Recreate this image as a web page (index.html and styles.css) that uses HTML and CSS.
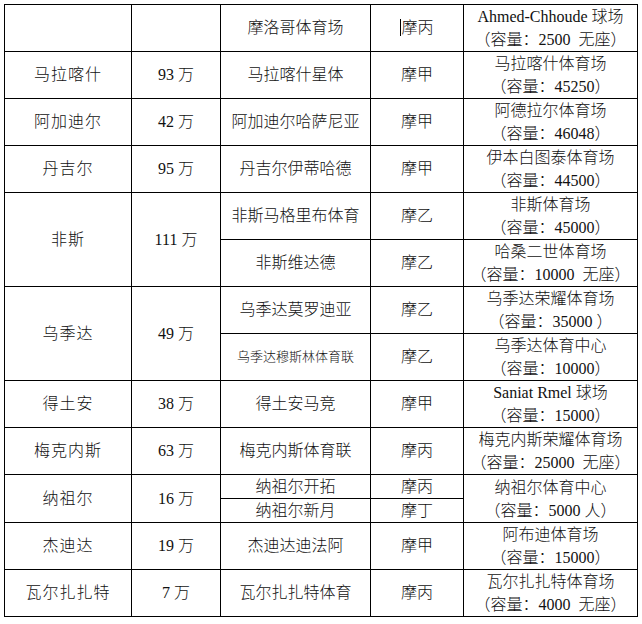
FILE: index.html
```html
<!DOCTYPE html>
<html lang="zh">
<head>
<meta charset="utf-8">
<link rel="stylesheet" href="styles.css">
</head>
<body>
<div class="wrap">
<table class="grid">
  <colgroup>
    <col class="c1"><col class="c2"><col class="c3"><col class="c4"><col class="c5">
  </colgroup>
  <tr class="row">
    <td></td><td></td><td>摩洛哥体育场</td><td><span class="caret"></span>摩丙</td>
    <td class="two">Ahmed-Chhoude 球场<br>（容量：2500&nbsp; 无座）</td>
  </tr>
  <tr class="row">
    <td class="city">马拉喀什</td><td class="num">93 万</td><td>马拉喀什星体</td><td>摩甲</td>
    <td class="two">马拉喀什体育场<br>（容量：45250）</td>
  </tr>
  <tr class="row">
    <td class="city">阿加迪尔</td><td class="num">42 万</td><td>阿加迪尔哈萨尼亚</td><td>摩甲</td>
    <td class="two">阿德拉尔体育场<br>（容量：46048）</td>
  </tr>
  <tr class="row">
    <td class="city">丹吉尔</td><td class="num">95 万</td><td>丹吉尔伊蒂哈德</td><td>摩甲</td>
    <td class="two">伊本白图泰体育场<br>（容量：44500）</td>
  </tr>
  <tr class="row">
    <td class="city" rowspan="2">非斯</td><td class="num" rowspan="2">111 万</td><td>非斯马格里布体育</td><td>摩乙</td>
    <td class="two">非斯体育场<br>（容量：45000）</td>
  </tr>
  <tr class="row">
    <td>非斯维达德</td><td>摩乙</td>
    <td class="two">哈桑二世体育场<br>（容量：10000&nbsp; 无座）</td>
  </tr>
  <tr class="row">
    <td class="city" rowspan="2">乌季达</td><td class="num" rowspan="2">49 万</td><td>乌季达莫罗迪亚</td><td>摩乙</td>
    <td class="two">乌季达荣耀体育场<br>（容量：35000 ）</td>
  </tr>
  <tr class="row">
    <td class="small">乌季达穆斯林体育联</td><td>摩乙</td>
    <td class="two">乌季达体育中心<br>（容量：10000）</td>
  </tr>
  <tr class="row">
    <td class="city">得土安</td><td class="num">38 万</td><td>得土安马竞</td><td>摩甲</td>
    <td class="two">Saniat Rmel 球场<br>（容量：15000）</td>
  </tr>
  <tr class="row">
    <td class="city">梅克内斯</td><td class="num">63 万</td><td>梅克内斯体育联</td><td>摩丙</td>
    <td class="two">梅克内斯荣耀体育场<br>（容量：25000&nbsp; 无座）</td>
  </tr>
  <tr class="sub">
    <td class="city" rowspan="2">纳祖尔</td><td class="num" rowspan="2">16 万</td><td>纳祖尔开拓</td><td>摩丙</td>
    <td class="two" rowspan="2">纳祖尔体育中心<br>（容量：5000 人）</td>
  </tr>
  <tr class="sub">
    <td>纳祖尔新月</td><td>摩丁</td>
  </tr>
  <tr class="row">
    <td class="city">杰迪达</td><td class="num">19 万</td><td>杰迪达迪法阿</td><td>摩甲</td>
    <td class="two">阿布迪体育场<br>（容量：15000）</td>
  </tr>
  <tr class="row">
    <td class="city">瓦尔扎扎特</td><td class="num">7 万</td><td>瓦尔扎扎特体育</td><td>摩丙</td>
    <td class="two">瓦尔扎扎特体育场<br>（容量：4000&nbsp; 无座）</td>
  </tr>
</table>
</div>
</body>
</html>
```

FILE: styles.css
```css
html, body {
  margin: 0;
  padding: 0;
  background: #ffffff;
}

.wrap {
  padding: 4px 0 0 4px;
}

.grid {
  border-collapse: collapse;
  table-layout: fixed;
  width: 634px;
  font-family: "Liberation Serif", "Noto Sans CJK SC", serif;
  font-size: 16px;
  font-weight: 300;
  color: #111111;
}

.c1 { width: 127px; }
.c2 { width: 89px; }
.c3 { width: 150px; }
.c4 { width: 93px; }
.c5 { width: 174px; }

.grid td {
  border: 1px solid #000000;
  padding: 0;
  text-align: center;
  vertical-align: middle;
  line-height: 20px;
  white-space: nowrap;
  overflow: hidden;
}

.row { height: 47px; }
.sub { height: 24px; }

.grid td.two {
  line-height: 23px;
}

.grid td.city {
  letter-spacing: 1px;
}

.grid td.small {
  font-size: 13px;
}

.caret {
  display: inline-block;
  width: 1px;
  height: 17px;
  background: #000000;
  vertical-align: -3px;
}
```
